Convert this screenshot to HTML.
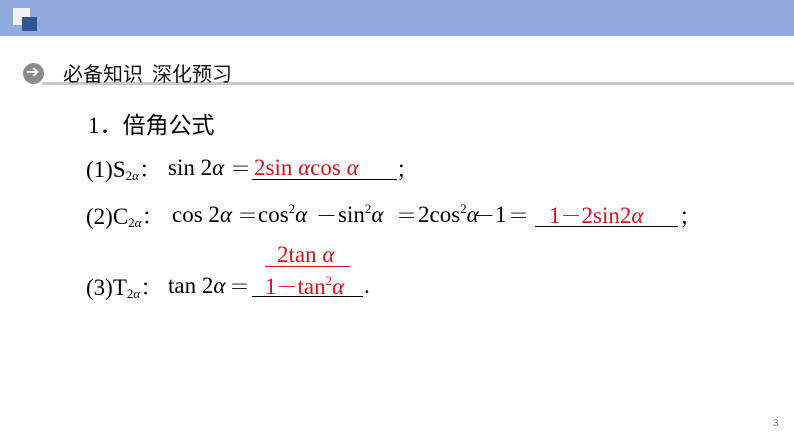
<!DOCTYPE html>
<html><head><meta charset="utf-8"><style>
body{margin:0;width:794px;height:446px;background:#fff;position:relative;overflow:hidden;font-family:"Liberation Serif","Noto Serif CJK SC",serif;}
.a{position:absolute;white-space:nowrap;}
.l{font-size:23px;color:#000;line-height:26px}
.r{color:#d0141e}
sub{font-size:13px;vertical-align:-3px;line-height:0}
sup{font-size:13px;vertical-align:9px;line-height:0}
i{font-style:italic}
.f{font-family:"Noto Serif CJK SC",serif}
.e{font-family:"Noto Serif CJK SC",serif;font-size:21px}
.ul{position:absolute;height:1px;background:#000}
</style></head><body>
<div class="a" style="left:0;top:0;width:794px;height:36px;background:#8faadc"></div>
<div class="a" style="left:13px;top:8px;width:17px;height:17px;background:#f2f2f2"></div>
<div class="a" style="left:22px;top:17px;width:15px;height:14px;background:#2f5597"></div>
<div class="a" style="left:42px;top:82px;width:752px;height:3px;background:#c8c8c8"></div>
<div class="a" style="left:23px;top:63px;width:21px;height:21px;border-radius:50%;background:#8c8c8c"></div>
<div class="a" style="left:26px;top:62px;color:#fff;font:bold 16px 'DejaVu Sans',sans-serif">➔</div>
<div class="a" style="left:63px;top:60px;font:20px 'Noto Sans CJK SC',sans-serif;color:#111;line-height:26px">必备知识&nbsp;&nbsp;深化预习</div>
<div class="a" style="left:88px;top:106px;font-size:23px;font-family:'Liberation Serif','Noto Sans CJK SC',serif">1．倍角公式</div>

<!-- line 1 -->
<div class="a l" style="left:86px;top:155px">(1)S<sub>2<i>α</i></sub><span class="f">：</span></div>
<div class="a l" style="left:168px;top:155px">sin 2<i>α</i></div>
<div class="a l e" style="left:230px;top:155px">＝</div>
<div class="a l r" style="left:254px;top:155px">2sin <i>α</i>cos <i>α</i></div>
<div class="ul" style="left:252px;top:179px;width:145px"></div>
<div class="a l f" style="left:396px;top:155px">；</div>

<!-- line 2 -->
<div class="a l" style="left:86px;top:202px">(2)C<sub>2<i>α</i></sub><span class="f">：</span></div>
<div class="a l" style="left:172px;top:202px">cos 2<i>α</i></div>
<div class="a l e" style="left:237px;top:202px">＝</div>
<div class="a l" style="left:258px;top:202px">cos<sup>2</sup><i>α</i></div>
<div class="a l e" style="left:316px;top:202px">－</div>
<div class="a l" style="left:338px;top:202px">sin<sup>2</sup><i>α</i></div>
<div class="a l e" style="left:396px;top:202px">＝</div>
<div class="a l" style="left:418px;top:202px">2cos<sup>2</sup><i>α</i></div>
<div class="a l e" style="left:474px;top:202px">－</div>
<div class="a l" style="left:495px;top:202px">1</div>
<div class="a l e" style="left:508px;top:202px">＝</div>
<div class="a l r" style="left:549px;top:202px">1<span class="e">－</span>2sin2<i>α</i></div>
<div class="ul" style="left:535px;top:226px;width:143px"></div>
<div class="a l f" style="left:679px;top:202px">；</div>

<!-- line 3 -->
<div class="a l r" style="left:277px;top:242px">2tan <i>α</i></div>
<div class="a" style="left:265px;top:266px;width:85px;height:1px;background:#d0141e"></div>
<div class="a l" style="left:86px;top:273px">(3)T<sub>2<i>α</i></sub><span class="f">：</span></div>
<div class="a l" style="left:168px;top:273px">tan 2<i>α</i></div>
<div class="a l e" style="left:229px;top:273px">＝</div>
<div class="a l r" style="left:265px;top:273px">1<span class="e">－</span>tan<sup>2</sup><i>α</i></div>
<div class="ul" style="left:252px;top:296px;width:111px"></div>
<div class="a l" style="left:364px;top:273px">.</div>

<div class="a" style="left:773px;top:418px;font:10px 'Liberation Sans',sans-serif;color:#888">3</div>
</body></html>
